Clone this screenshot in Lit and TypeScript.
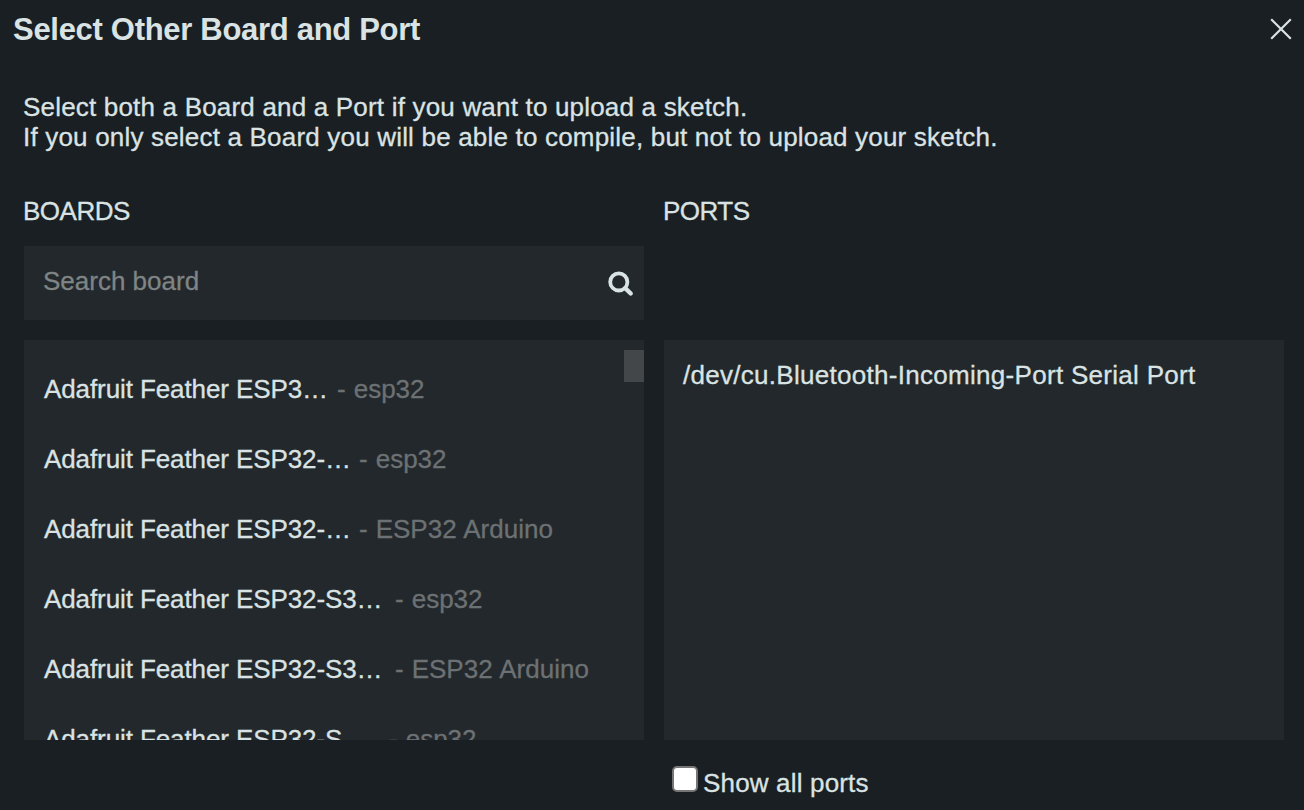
import { LitElement, html, css } from "lit";
import { customElement } from "lit/decorators.js";

interface Board {
  name: string;
  vendor: string;
  nameWidth: number;
}

const BOARDS: Board[] = [
  { name: "Adafruit Feather ESP3…", vendor: "esp32", nameWidth: 293 },
  { name: "Adafruit Feather ESP32-…", vendor: "esp32", nameWidth: 315 },
  { name: "Adafruit Feather ESP32-…", vendor: "ESP32 Arduino", nameWidth: 315 },
  { name: "Adafruit Feather ESP32-S3…", vendor: "esp32", nameWidth: 351 },
  { name: "Adafruit Feather ESP32-S3…", vendor: "ESP32 Arduino", nameWidth: 351 },
  { name: "Adafruit Feather ESP32-S…", vendor: "esp32", nameWidth: 345 },
];

@customElement("app-root")
export class AppRoot extends LitElement {
  static styles = css`
    :host {
      display: block;
      box-sizing: border-box;
      width: 1304px;
      height: 810px;
      overflow: hidden;
      background: #1a1f23;
      color: #dae3e3;
      font: 26px/30px "Liberation Sans", Arial, sans-serif;
      -webkit-text-stroke: 0.3px currentColor;
    }
    .header {
      display: flex;
      justify-content: space-between;
      height: 80px;
      padding: 12px 12px 0 13px;
    }
    .title {
      margin: 0;
      font-size: 31px;
      line-height: 36px;
      font-weight: 700;
      letter-spacing: -0.3px;
      -webkit-text-stroke: 0;
    }
    .close {
      display: block;
      margin-top: 6px;
    }
    .intro {
      height: 104px;
      padding-left: 23px;
      letter-spacing: 0.19px;
      white-space: nowrap;
    }
    .columns {
      display: grid;
      grid-template-columns: 620px 620px;
      column-gap: 20px;
      padding-left: 24px;
    }
    .heading {
      height: 50px;
      margin-left: -1px;
      letter-spacing: -0.5px;
    }
    .search {
      display: flex;
      box-sizing: border-box;
      height: 74px;
      padding: 20px 10px 0 19px;
      justify-content: space-between;
      background: #23282c;
    }
    .placeholder {
      color: #7f8485;
    }
    .magnifier {
      display: block;
      margin-top: 5px;
    }
    .spacer {
      height: 74px;
    }
    .panel {
      display: flex;
      height: 400px;
      margin-top: 20px;
      overflow: hidden;
      background: #23282c;
    }
    .list {
      flex: 1;
      padding-top: 14px;
    }
    .board {
      display: flex;
      height: 50px;
      padding: 20px 0 0 20px;
      white-space: pre;
    }
    .name {
      flex: none;
      letter-spacing: -0.1px;
    }
    .vendor {
      color: #6c7173;
      word-spacing: 0.8px;
    }
    .thumb {
      width: 20px;
      height: 32px;
      margin-top: 10px;
      background: #434749;
    }
    .port {
      padding: 20px 19px;
      white-space: nowrap;
      letter-spacing: 0.29px;
    }
    .footer {
      display: flex;
      padding: 26px 0 0 672px;
      gap: 5px;
    }
    .check {
      box-sizing: border-box;
      width: 26px;
      height: 26px;
      border: 2px solid #767676;
      border-radius: 5px;
      background: #fff;
    }
    .label {
      margin-top: 2px;
      letter-spacing: 0.17px;
    }
  `;

  render() {
    return html`
      <div class="header">
        <h1 class="title">Select Other Board and Port</h1>
        <svg class="close" width="22" height="22" viewBox="0 0 22 22" fill="none" stroke="#dae3e3" stroke-width="2.2">
          <path d="M1.2 1.2 20.8 20.8M20.8 1.2 1.2 20.8" />
        </svg>
      </div>
      <div class="intro">
        <div>Select both a Board and a Port if you want to upload a sketch.</div>
        <div>If you only select a Board you will be able to compile, but not to upload your sketch.</div>
      </div>
      <div class="columns">
        <section>
          <div class="heading">BOARDS</div>
          <div class="search">
            <span class="placeholder">Search board</span>
            <svg class="magnifier" width="26" height="26" viewBox="0 0 26 26" fill="none" stroke="#dae3e3">
              <circle cx="10.8" cy="10.9" r="8.6" stroke-width="3.8" />
              <path d="M17.2 17.2 22.7 22.5" stroke-width="4.4" stroke-linecap="round" />
            </svg>
          </div>
          <div class="panel">
            <div class="list">
              ${BOARDS.map(
                (b) => html`<div class="board"><span class="name" style="width:${b.nameWidth}px">${b.name}</span><span class="vendor">- ${b.vendor}</span></div>`
              )}
            </div>
            <div class="thumb"></div>
          </div>
        </section>
        <section>
          <div class="heading">PORTS</div>
          <div class="spacer"></div>
          <div class="panel">
            <div class="port">/dev/cu.Bluetooth-Incoming-Port Serial Port</div>
          </div>
        </section>
      </div>
      <div class="footer">
        <span class="check"></span>
        <span class="label">Show all ports</span>
      </div>
    `;
  }
}
